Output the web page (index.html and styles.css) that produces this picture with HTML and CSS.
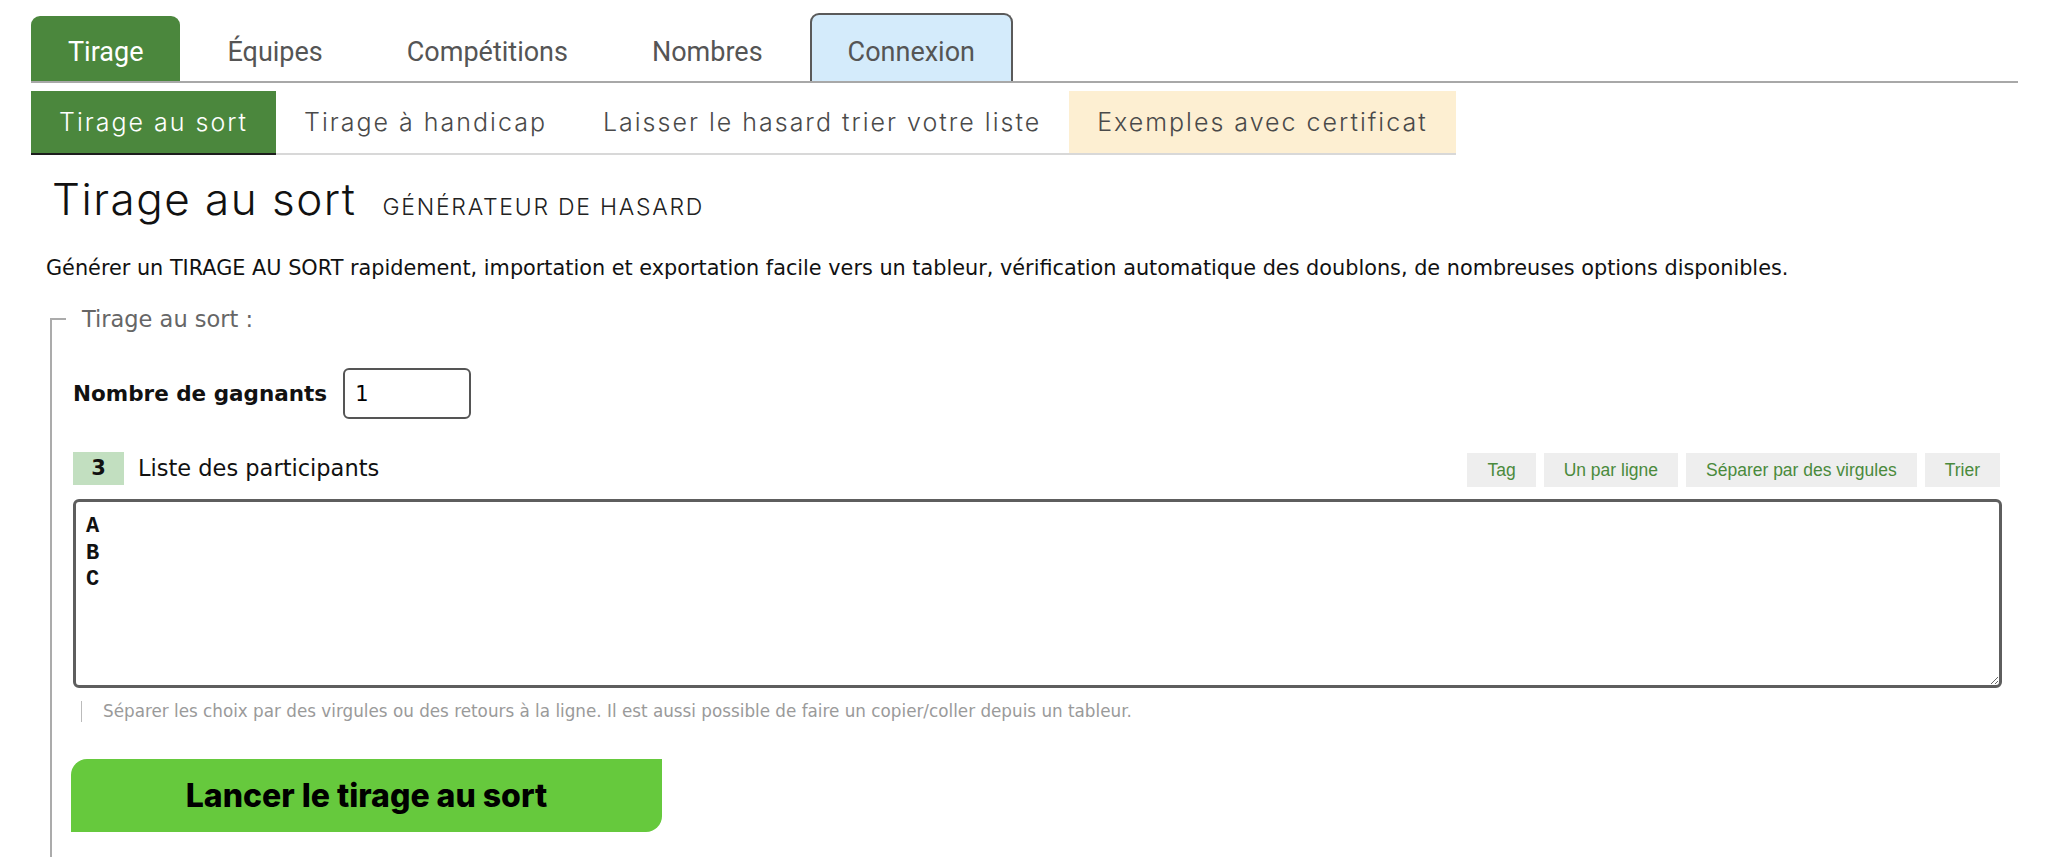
FILE: index.html
```html
<!DOCTYPE html>
<html lang="fr">
<head>
<meta charset="utf-8">
<title>Tirage au sort</title>
<link rel="stylesheet" href="styles.css">
</head>
<body>
<div class="page">
  <nav class="tabs">
    <a class="tab tab-active">Tirage</a>
    <a class="tab">Équipes</a>
    <a class="tab">Compétitions</a>
    <a class="tab">Nombres</a>
    <a class="tab tab-login">Connexion</a>
  </nav>
  <nav class="subtabs">
    <a class="subtab subtab-active">Tirage au sort</a>
    <a class="subtab">Tirage à handicap</a>
    <a class="subtab">Laisser le hasard trier votre liste</a>
    <a class="subtab subtab-examples">Exemples avec certificat</a>
  </nav>
  <h1 class="title">Tirage au sort <small class="subtitle">GÉNÉRATEUR DE HASARD</small></h1>
  <p class="intro">Générer un TIRAGE AU SORT rapidement, importation et exportation facile vers un tableur, vérification automatique des doublons, de nombreuses options disponibles.</p>
  <section class="fieldset">
    <div class="legend">Tirage au sort :</div>
    <div class="winners">
      <label class="winners-label" for="n">Nombre de gagnants</label>
      <input class="winners-input" id="n" type="text" value="1">
    </div>
    <div class="list-head">
      <span class="count">3</span>
      <span class="list-label">Liste des participants</span>
      <div class="tools">
        <button class="tool">Tag</button>
        <button class="tool">Un par ligne</button>
        <button class="tool">Séparer par des virgules</button>
        <button class="tool">Trier</button>
      </div>
    </div>
    <textarea class="participants">A
B
C</textarea>
    <p class="help">Séparer les choix par des virgules ou des retours à la ligne. Il est aussi possible de faire un copier/coller depuis un tableur.</p>
    <button class="launch">Lancer le tirage au sort</button>
  </section>
</div>
</body>
</html>
```
FILE: styles.css
```css
html, body {
  margin: 0;
  padding: 0;
  background: #fff;
  height: 100%;
  overflow: hidden;
}
body {
  font-family: "DejaVu Sans", Verdana, sans-serif;
  color: #111;
}
.page {
  padding-left: 31px;
  width: 1987px;
}
.tabs {
  display: flex;
  align-items: flex-end;
  gap: 10px;
  margin-top: 13px;
  border-bottom: 2px solid #a8a8a8;
}
.tab {
  font-family: Roboto, "Liberation Sans", sans-serif;
  font-size: 27px;
  color: #555;
  height: 57px;
  line-height: 57px;
  padding: 8px 37px 0;
  border-radius: 9px 9px 0 0;
}
.tab-active {
  background: #4b873d;
  color: #fff;
}
.tab-login {
  background: #d4ebfb;
  border: 2px solid #5a5a5a;
  border-bottom: none;
  height: 58px;
  line-height: 58px;
  padding: 8px 36px 0;
}
.subtabs {
  display: flex;
  margin-top: 8px;
}
.subtab {
  font-family: Inter, "Noto Sans", sans-serif;
  font-weight: 300;
  font-size: 25px;
  letter-spacing: 2px;
  color: #4a4a4a;
  height: 62px;
  line-height: 62px;
  padding: 0 28px;
  border-bottom: 2px solid #d8d8d8;
}
.subtab-active {
  background: #4b873d;
  color: #fff;
  border-bottom-color: #1d1d1d;
}
.subtab-examples {
  background: #fdefd2;
}
.title {
  font-family: Inter, "Noto Sans", sans-serif;
  font-weight: 300;
  font-size: 44px;
  letter-spacing: 1.5px;
  line-height: 52px;
  margin: 18px 0 0 21px;
  color: #111;
}
.subtitle {
  font-size: 23px;
  font-weight: 300;
  letter-spacing: 1.75px;
  margin-left: 12px;
  color: #222;
}
.intro {
  font-size: 20.8px;
  margin: 22px 0 0 15px;
  line-height: 26px;
}
.fieldset {
  margin: 38px 0 0 19px;
  border-left: 2px solid #ababab;
  padding-left: 21px;
  height: 540px;
}
.legend {
  position: relative;
  font-size: 22.5px;
  color: #666;
  line-height: 28px;
  margin-left: 9px;
  top: -14px;
}
.legend::before {
  content: "";
  position: absolute;
  left: -32px;
  top: 13px;
  width: 16px;
  border-top: 2px solid #ababab;
}
.winners {
  display: flex;
  align-items: center;
  gap: 16px;
  margin-top: 21px;
}
.winners-label {
  font-weight: bold;
  font-size: 21.5px;
}
.winners-input {
  width: 104px;
  height: 47px;
  border: 2px solid #555;
  border-radius: 6px;
  font-family: "DejaVu Sans", sans-serif;
  font-size: 21px;
  padding: 0 10px;
  margin: 0;
}
.list-head {
  display: flex;
  align-items: center;
  margin-top: 34px;
}
.count {
  background: #c2dfc0;
  width: 51px;
  height: 33px;
  line-height: 33px;
  text-align: center;
  font-weight: bold;
  font-size: 21px;
  margin-top: -4px;
}
.list-label {
  font-size: 22.5px;
  margin-left: 14px;
  margin-top: -4px;
}
.tools {
  display: flex;
  gap: 8px;
  margin-left: auto;
  margin-right: 18px;
}
.tool {
  font-family: "Liberation Sans", Arial, sans-serif;
  font-size: 17.5px;
  color: #4a8a3c;
  background: #eeeeee;
  border: none;
  height: 34px;
  padding: 0 20px;
  margin: 0;
}
.participants {
  display: block;
  box-sizing: border-box;
  width: 1929px;
  height: 189px;
  margin-top: 12px;
  border: 3px solid #5e5e5e;
  border-radius: 6px;
  font-family: "Liberation Mono", "Courier New", monospace;
  font-weight: bold;
  font-size: 22px;
  line-height: 26.5px;
  padding: 12px 10px;
  color: #111;
  resize: both;
}
.help {
  font-size: 16.8px;
  color: #9a9a9a;
  margin: 13px 0 0 8px;
  padding-left: 21px;
  border-left: 1px solid #bbb;
  line-height: 21px;
}
.launch {
  display: block;
  margin-top: 37px;
  margin-left: -2px;
  width: 591px;
  height: 73px;
  border: none;
  background: #66c93d;
  border-radius: 16px 0 16px 0;
  font-family: Inter, "Noto Sans", sans-serif;
  font-weight: 800;
  font-size: 32px;
  color: #000;
}
```
